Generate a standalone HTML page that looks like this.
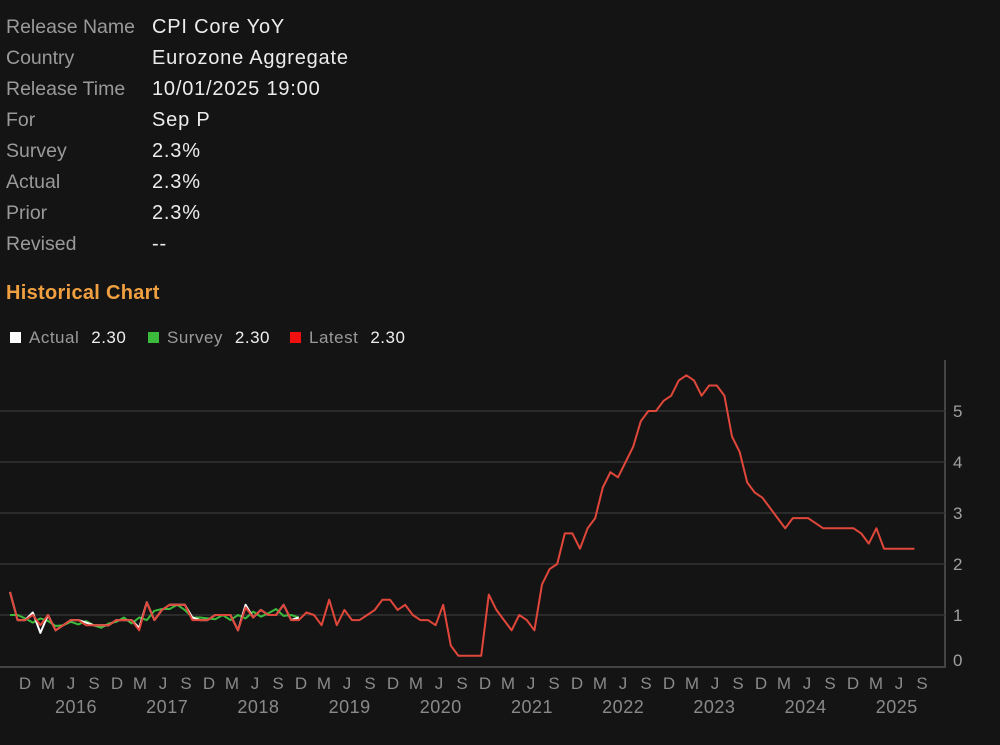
<!DOCTYPE html>
<html><head><meta charset="utf-8"><style>
html,body{margin:0;padding:0;background:#141414;width:1000px;height:745px;overflow:hidden;font-family:"Liberation Sans","DejaVu Sans",sans-serif}
.r{position:absolute;font-size:20px;line-height:22px}
.l{left:6px;color:#9a9a9a;font-size:19.5px;letter-spacing:0}.v{left:152px;color:#ececec;letter-spacing:0.8px}
#h{position:absolute;left:6px;top:282px;color:#f0a040;font-size:20px;font-weight:bold;letter-spacing:0.3px}
.lg{position:absolute;top:328px;font-size:17px;color:#9a9a9a;letter-spacing:0.5px}
.lg b{font-weight:normal;color:#eee;margin-left:12px}
.sq{display:inline-block;width:11px;height:11px;margin-right:8px;vertical-align:0}
</style></head><body>
<div class="r l" style="top:16px">Release Name</div><div class="r v" style="top:16px">CPI Core YoY</div>
<div class="r l" style="top:47px">Country</div><div class="r v" style="top:47px">Eurozone Aggregate</div>
<div class="r l" style="top:78px">Release Time</div><div class="r v" style="top:78px">10/01/2025 19:00</div>
<div class="r l" style="top:109px">For</div><div class="r v" style="top:109px">Sep P</div>
<div class="r l" style="top:140px">Survey</div><div class="r v" style="top:140px">2.3%</div>
<div class="r l" style="top:171px">Actual</div><div class="r v" style="top:171px">2.3%</div>
<div class="r l" style="top:202px">Prior</div><div class="r v" style="top:202px">2.3%</div>
<div class="r l" style="top:233px">Revised</div><div class="r v" style="top:233px">--</div>
<div id="h">Historical Chart</div>
<div class="lg" style="left:10px"><span class="sq" style="background:#fff"></span>Actual<b>2.30</b></div>
<div class="lg" style="left:148px"><span class="sq" style="background:#3cba3c"></span>Survey<b>2.30</b></div>
<div class="lg" style="left:290px"><span class="sq" style="background:#f01010"></span>Latest<b>2.30</b></div>
<svg id="c" width="1000" height="745" style="position:absolute;left:0;top:0" font-family="Liberation Sans, sans-serif"></svg>
<script>
var d=[1.45,0.9,0.9,1.0,0.8,1.0,0.7,0.8,0.9,0.9,0.8,0.8,0.8,0.8,0.9,0.9,0.9,0.7,1.25,0.9,1.1,1.2,1.2,1.2,0.9,0.9,0.9,1.0,1.0,1.0,0.7,1.15,0.95,1.1,1.0,1.0,1.2,0.9,0.9,1.05,1.0,0.8,1.3,0.8,1.1,0.9,0.9,1.0,1.1,1.3,1.3,1.1,1.2,1.0,0.9,0.9,0.8,1.2,0.4,0.2,0.2,0.2,0.2,1.4,1.1,0.9,0.7,1.0,0.9,0.7,1.6,1.9,2.0,2.6,2.6,2.3,2.7,2.9,3.5,3.8,3.7,4.0,4.3,4.8,5.0,5.0,5.2,5.3,5.6,5.7,5.6,5.3,5.5,5.5,5.3,4.5,4.2,3.6,3.4,3.3,3.1,2.9,2.7,2.9,2.9,2.9,2.8,2.7,2.7,2.7,2.7,2.7,2.6,2.4,2.7,2.3,2.3,2.3,2.3,2.3];
var s='';
function X(i){return 10+7.6*i}function Y(v){return 666-51*v}
s+='<line x1="0" y1="667" x2="945" y2="667" stroke="#444" stroke-width="2"/>';
s+='<line x1="945" y1="360" x2="945" y2="668" stroke="#444" stroke-width="2"/>';
for(var k=1;k<=5;k++){s+='<line x1="0" y1="'+Y(k)+'" x2="945" y2="'+Y(k)+'" stroke="#333" stroke-width="1.5"/>';
s+='<text x="953" y="'+(Y(k)+6)+'" fill="#a0a0a0" font-size="17">'+k+'</text>';}
s+='<text x="953" y="666" fill="#a0a0a0" font-size="17">0</text>';
var m=['D','M','J','S'];
for(var q=0;q<40;q++){s+='<text x="'+(25+23*q)+'" y="689" fill="#8a8a8a" font-size="17" text-anchor="middle">'+m[q%4]+'</text>';}
for(var y=0;y<10;y++){s+='<text x="'+(76+91.2*y)+'" y="713" fill="#8a8a8a" font-size="18" letter-spacing="0.5" text-anchor="middle">'+(2016+y)+'</text>';}
function pl(a,c){var p=a.map(function(v,i){return X(i).toFixed(1)+','+Y(v).toFixed(1)}).join(' ');return '<polyline points="'+p+'" fill="none" stroke="'+c+'" stroke-width="2" stroke-linejoin="round"/>';}
var N=39;
var g=d.slice(0,N).map(function(v,i){var n=(i%5==0?0.05:(i%3==0?-0.05:0));return i<2?1.0:((d[i-1]+d[i]+(d[i+1]||d[i]))/3+n);});
var w=d.slice(0,N).map(function(v,i){return i==4?0.65:(i%7==3?v+0.05:v)});
s+=pl(g,'#3cba3c')+pl(w,'#ffffff')+pl(d,'#e0473a');
document.getElementById('c').innerHTML=s;
</script>
</body></html>
